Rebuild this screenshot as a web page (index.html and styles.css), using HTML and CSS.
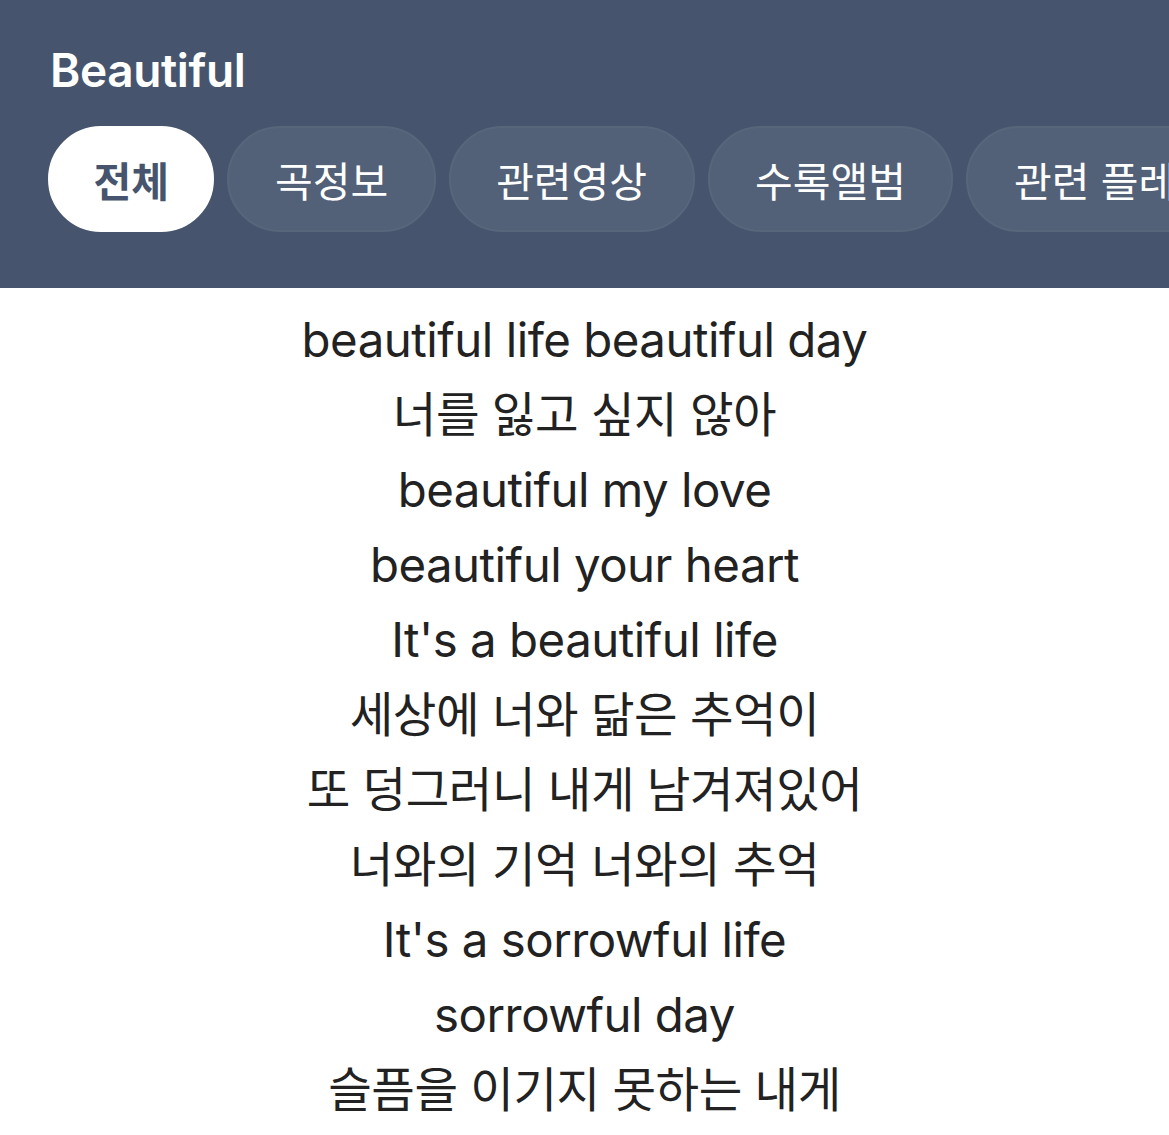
FILE: index.html
```html
<!DOCTYPE html>
<html lang="ko">
<head>
    <meta charset="UTF-8">
    <meta name="viewport" content="width=device-width, initial-scale=1.0">
    <title>Beautiful</title>
    <link rel="stylesheet" href="styles.css">
</head>
<body>
    <div class="header">
        <div class="title">Beautiful</div>
        <div class="tabs">
            <div class="tab active">전체</div>
            <div class="tab">곡정보</div>
            <div class="tab">관련영상</div>
            <div class="tab">수록앨범</div>
            <div class="tab">관련 플레이리스트</div>
        </div>
    </div>

    <div class="lyrics">
        <p>beautiful life beautiful day</p>
        <p>너를 잃고 싶지 않아</p>
        <p>beautiful my love</p>
        <p>beautiful your heart</p>
        <p>It's a beautiful life</p>
        <p>세상에 너와 닮은 추억이</p>
        <p>또 덩그러니 내게 남겨져있어</p>
        <p>너와의 기억 너와의 추억</p>
        <p>It's a sorrowful life</p>
        <p>sorrowful day</p>
        <p>슬픔을 이기지 못하는 내게</p>
    </div>
</body>
</html>
```

FILE: styles.css
```css
body {
    margin: 0;
    padding: 0;
    overflow: hidden;
    background-color: #fff;
    font-family: Inter, "Noto Sans CJK KR", sans-serif;
}
.header {
    background-color: #46556d;
    padding: 40px 0 56px 50px;
    overflow: hidden;
}
.title {
    color: #fff;
    font-size: 46px;
    font-weight: 600;
    line-height: 60px;
    letter-spacing: -0.4px;
}
.tabs {
    display: flex;
    gap: 13px;
    margin-top: 26px;
    margin-left: -2px;
    white-space: nowrap;
}
.tab {
    flex: none;
    height: 106px;
    box-sizing: border-box;
    padding: 0 45.5px;
    border-radius: 53px;
    display: flex;
    align-items: center;
    font-family: "Noto Sans CJK KR", sans-serif;
    font-size: 41px;
    color: #fff;
    background-color: #536178;
    border: 2px solid #58667c;
}
.tab.active {
    padding: 0 43.5px;
    background-color: #fff;
    border-color: #fff;
    color: #46556d;
    font-weight: 700;
}
.lyrics {
    padding-top: 14px;
    text-align: center;
    color: #222;
}
.lyrics p {
    margin: 0;
    font-size: 47.4px;
    line-height: 75px;
    letter-spacing: -0.5px;
}
```
